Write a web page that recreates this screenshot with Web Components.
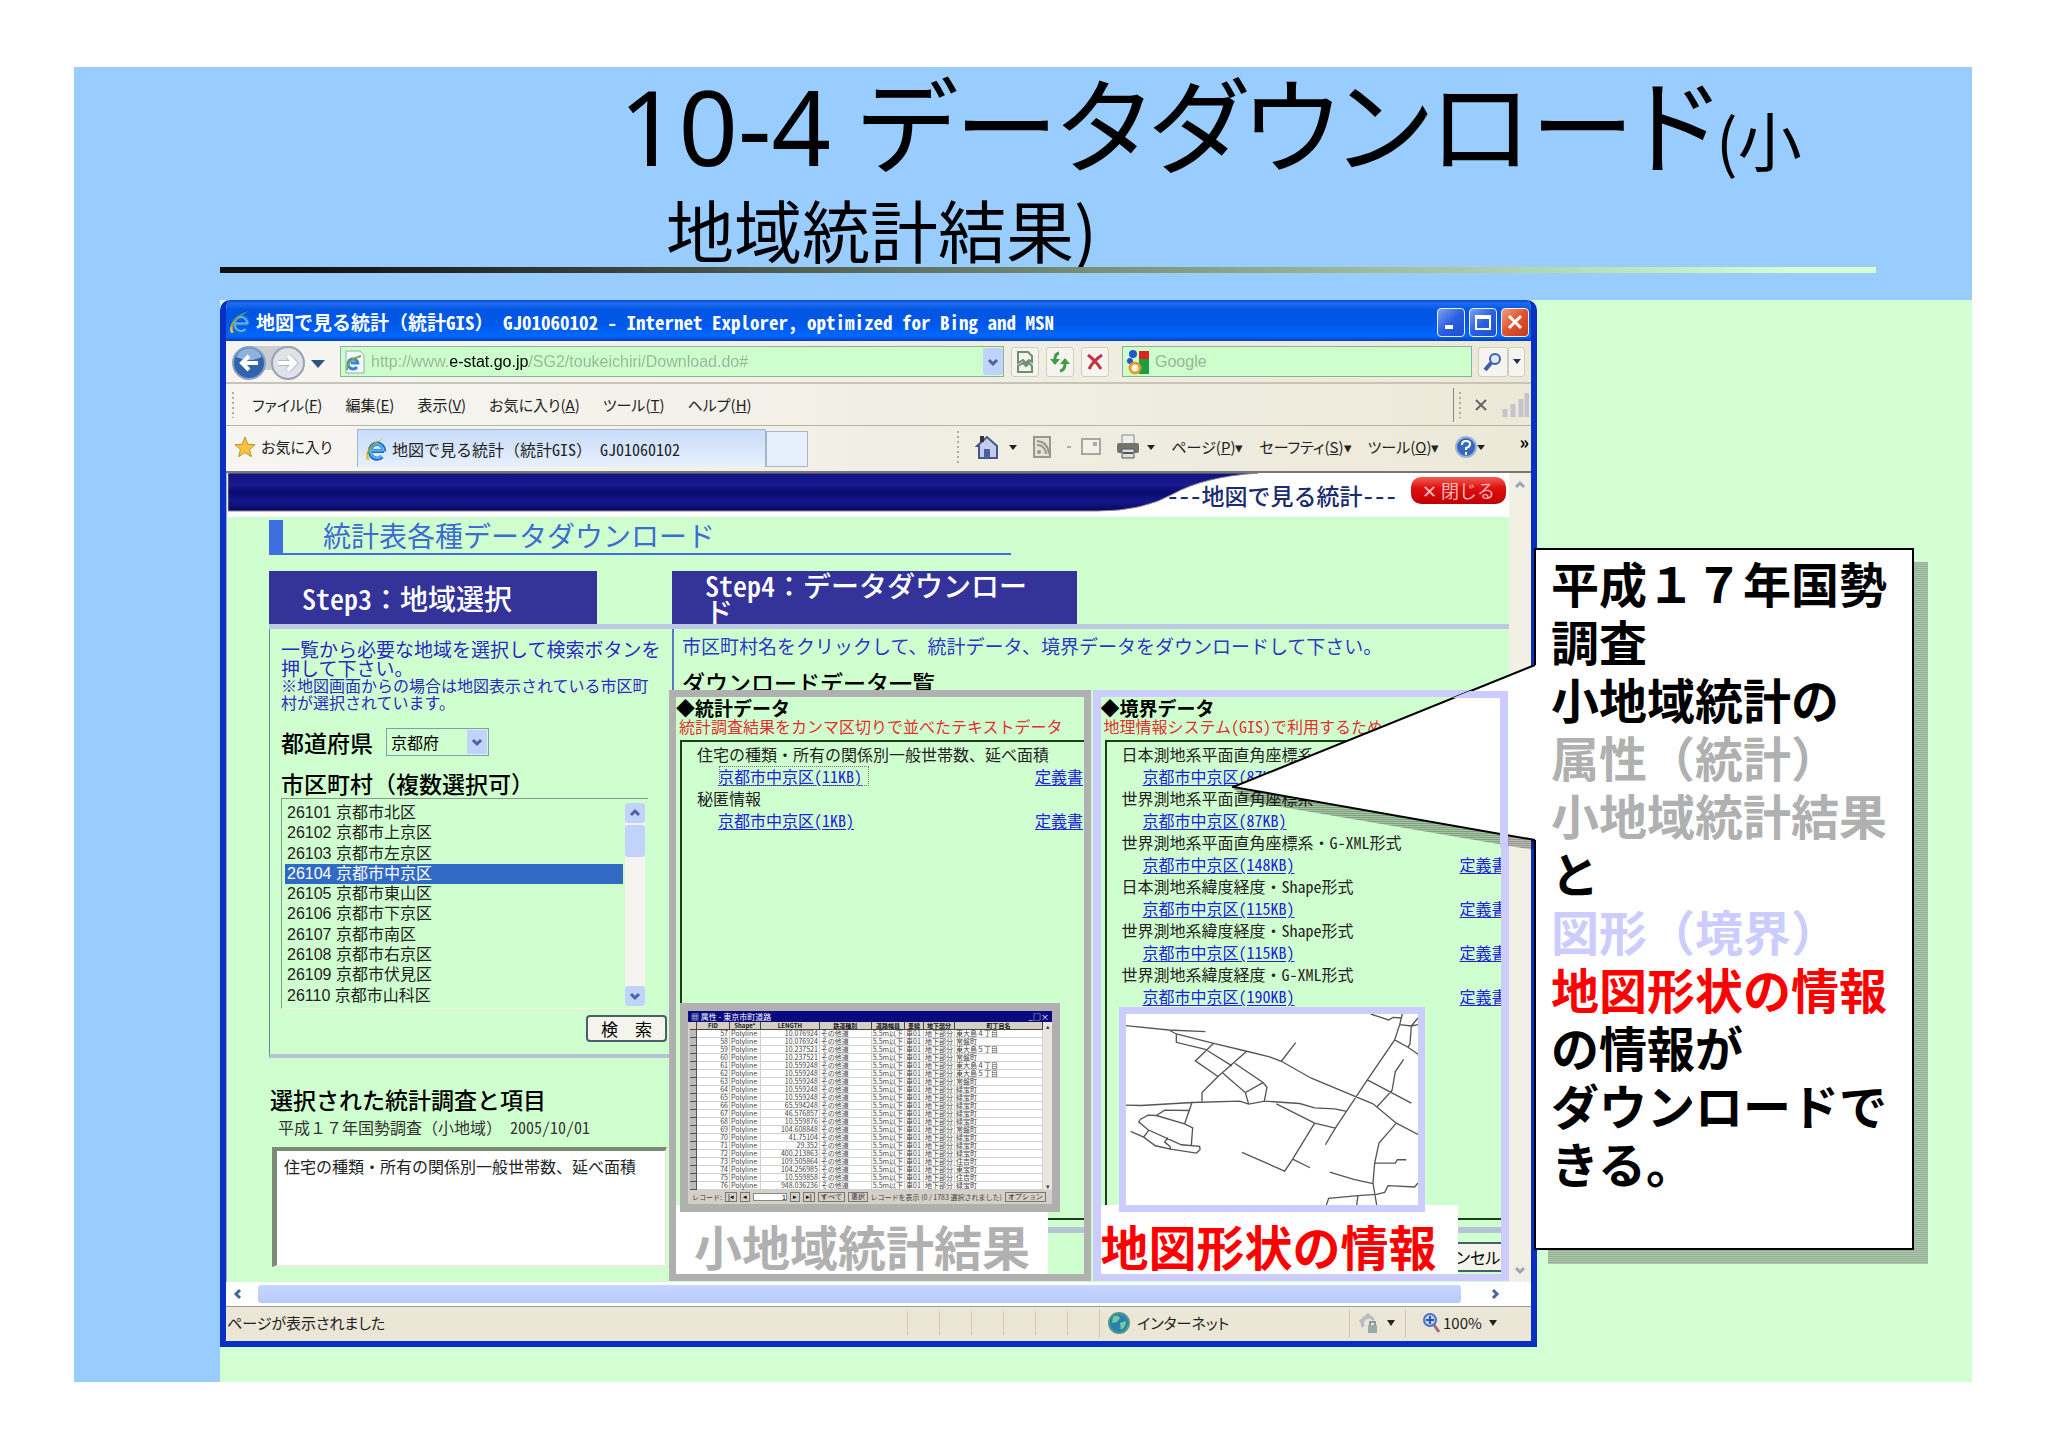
<!DOCTYPE html>
<html lang="ja">
<head>
<meta charset="utf-8">
<title>10-4 データダウンロード</title>
<style>
  body { margin: 0; background: #fff; font-family: "Noto Sans CJK JP", sans-serif; color: #000; }
</style>
</head>
<body>
<slide-page>
  <slide-title slot="title"></slide-title>
  <ie-window slot="main">
    <title-bar></title-bar>
    <address-bar></address-bar>
    <menu-bar></menu-bar>
    <tab-bar></tab-bar>
    <stat-page slot="page">
      <stat-banner></stat-banner>
      <stat-heading>統計表各種データダウンロード</stat-heading>
      <region-step slot="left"></region-step>
      <download-step slot="right">
        <data-frame class="gray">
          <span slot="title">◆統計データ</span>
          <span slot="note">統計調査結果をカンマ区切りで並べたテキストデータ</span>
          <data-entry label="住宅の種類・所有の関係別一般世帯数、延べ面積" size="11KB" focus more></data-entry>
          <data-entry label="秘匿情報" size="1KB" more></data-entry>
          <attribute-table slot="figure"></attribute-table>
          <span slot="caption">小地域統計結果</span>
        </data-frame>
        <data-frame class="lilac">
          <span slot="title">◆境界データ</span>
          <span slot="note">地理情報システム(GIS)で利用するため</span>
          <data-entry label="日本測地系平面直角座標系" size="87KB"></data-entry>
          <data-entry label="世界測地系平面直角座標系" size="87KB"></data-entry>
          <data-entry label="世界測地系平面直角座標系・G-XML形式" size="148KB" more></data-entry>
          <data-entry label="日本測地系緯度経度・Shape形式" size="115KB" more></data-entry>
          <data-entry label="世界測地系緯度経度・Shape形式" size="115KB" more></data-entry>
          <data-entry label="世界測地系緯度経度・G-XML形式" size="190KB" more></data-entry>
          <street-map slot="figure"></street-map>
          <span slot="caption">地図形状の情報</span>
          <button slot="cancel" type="button">キャンセル</button>
        </data-frame>
      </download-step>
    </stat-page>
    <status-bar slot="status"></status-bar>
  </ie-window>
  <speech-callout slot="callout">
    <p>平成１７年国勢調査</p>
    <p>小地域統計の</p>
    <p class="gray">属性（統計）</p>
    <p class="gray">小地域統計結果</p>
    <p>と</p>
    <p class="lilac">図形（境界）</p>
    <p class="red">地図形状の情報</p>
    <p>の情報が</p>
    <p>ダウンロードできる。</p>
  </speech-callout>
</slide-page>

<script>
const define = (tag, css, html) => {
  const t = document.createElement('template');
  t.innerHTML = `<style>*,:host{box-sizing:border-box}:host{display:block}${css}</style>${typeof html === 'string' ? html : ''}`;
  customElements.define(tag, class extends HTMLElement {
    connectedCallback() {
      if (this.shadowRoot) return;
      const root = this.attachShadow({ mode: 'open' });
      root.append(t.content.cloneNode(true));
      if (typeof html === 'function') root.innerHTML += html(this);
    }
  });
};

const ieLogo = `<svg viewBox="0 0 24 24" width="24" height="24" aria-hidden="true">
  <path d="M7 14h13M20 14.500a7 7.500 0 1 0-2 5" fill="none" stroke="#1f6cc8" stroke-width="4.200"/>
  <path d="M7 13.500h12.500M19.500 14a6.500 7 0 1 0-2 5" fill="none" stroke="#5ab4f4" stroke-width="2"/>
  <path d="M3 23C-1 17 7 5 21 1c-6 3-9 5-12 8C5 14 3 19 6 22c-1 1-2 1-3 1z" fill="#e8bc3c"/>
  <path d="M3 17c1-5 6-11 13-14C11 7 6 12 5 17z" fill="#6ea648"/></svg>`;
const chevron = (d) => `<svg viewBox="0 0 12 12" width="12" height="12" aria-hidden="true"><path d="${{
  up: 'M2 8l4-4 4 4', down: 'M2 4l4 4 4-4', left: 'M8 2L4 6l4 4', right: 'M4 2l4 4-4 4' }[d]}" fill="none" stroke="#4a62a0" stroke-width="3"/></svg>`;

define('slide-page', `
  :host{margin:67px 76px 67px 74px;background:#99ccff;position:relative}
  .body{display:grid;grid-template-columns:minmax(0,1fr) 435px;margin-left:146px;background:#d4ffd4;padding-bottom:35px}
  .callout{position:absolute;right:58px;top:481px;width:380px}`,
  `<slot name="title"></slot><div class="body"><slot name="main"></slot></div><div class="callout"><slot name="callout"></slot></div>`);

define('slide-title', `
  :host{height:233px;display:flex;flex-direction:column}
  h1{margin:0;font-weight:400;white-space:nowrap;padding:2px 0 0 592px;height:200px}
  .a{display:block;text-indent:-47px;font-size:104px;line-height:114px;font-family:"Noto Sans","Noto Sans CJK JP",sans-serif;font-feature-settings:"palt"}
  .a small{font-size:64px}
  .b{display:block;font-size:68px;line-height:68px}
  .b,.a small{font-family:"Noto Sans CJK JP",sans-serif}
  .rule{margin:0 96px 0 146px;height:6px;background:linear-gradient(90deg,#111 5%,#d4ffd4 95%)}`,
  `<h1><span class="a">10-4 データダウンロード<small>(小</small></span><span class="b">地域統計結果)</span></h1><div class="rule"></div>`);

define('ie-window', `
  :host{display:flex;flex-direction:column;background:#ece9d8;border:solid #0831c4;border-width:0 6px 6px;border-radius:10px 10px 0 0;overflow:hidden;font-size:16px;line-height:20px}
  .view{display:flex;padding-left:1px;border-left:1px solid #8fb4d0}
  .view ::slotted(*){flex:1;min-width:0}
  .v{width:22px;background:#f8f6f0;display:flex;flex-direction:column;justify-content:space-between;align-items:center;padding:6px 0;opacity:.5}
  .h{display:flex;align-items:center;height:24px;background:#fff;padding:2px 30px 2px 6px}
  .h i{flex:1;height:18px;margin:0 28px 0 14px;background:linear-gradient(#c6d6ff,#b6ccf8);border-radius:3px}`,
  `<slot></slot><div class="view"><slot name="page"></slot><div class="v">${chevron('up')}${chevron('down')}</div></div>
   <div class="h">${chevron('left')}<i></i>${chevron('right')}</div><slot name="status"></slot>`);

define('title-bar', `
  :host{display:flex;align-items:center;height:41px;margin:0 -6px;padding:3px 8px 0 8px;background:linear-gradient(#0a48c8,#1c6cf0 8%,#0055e0 25%,#0058ea 60%,#0068ff 88%,#0040c0)}
  h2{flex:1;margin:0 0 0 4px;font-size:19px;line-height:24px;font-weight:700;color:#fff;white-space:nowrap;font-feature-settings:"hwid"}
  .f{font-feature-settings:normal}
  button{width:28px;height:29px;margin-left:4px;padding:0;border:1px solid #e8f0ff;border-radius:4px;background:linear-gradient(135deg,#7ba2f5,#2a5fe0 50%,#1c4fd0);display:grid;place-items:center}
  .x{background:linear-gradient(135deg,#f0a080,#e0502c 50%,#c83c18)}`,
  `${ieLogo}<h2>地図で見る統計<span class="f">（</span>統計GIS<span class="f">）　</span>GJ01060102 - Internet Explorer, optimized for Bing and MSN</h2>
  <button type="button" aria-label="最小化"><svg width="18" height="18"><path d="M3 14h8" stroke="#fff" stroke-width="4"/></svg></button>
  <button type="button" aria-label="最大化"><svg width="18" height="18"><path d="M2 3h14v13H2zM2 5h14" fill="none" stroke="#fff" stroke-width="2"/></svg></button>
  <button type="button" class="x" aria-label="閉じる"><svg width="18" height="18"><path d="M3 3l12 12M15 3L3 15" stroke="#fff" stroke-width="3"/></svg></button>`);

define('address-bar', `
  :host{display:flex;align-items:center;height:43px;padding:0 6px;background:linear-gradient(90deg,#f6f5f2,#ece9d8);border-bottom:2px solid #c8c5b8}
  .nav{width:96px;height:38px}
  .box{display:flex;align-items:center;height:31px;background:#ccffcc;border:1px solid #8fae9c;padding:0 0 0 4px}
  .url{width:664px;margin-left:12px}
  input{flex:1;min-width:0;border:0;padding:0;margin:0 0 0 6px;font:16px/24px "Liberation Sans","Noto Sans CJK JP",sans-serif;background:none;color:#9ab49a;outline:0}
  .url input{background:linear-gradient(90deg,#9ab49a 79px,#000 79px,#000 158px,#9ab49a 158px);-webkit-background-clip:text;background-clip:text;color:transparent}
  button{padding:0;border:1px solid #cfccc0;border-radius:3px;background:#f6f4ee;width:28px;height:30px;display:grid;place-items:center;margin-left:7px}
  .drop{background:#c2d3fb;border:0;margin:0;width:20px;height:27px}
  .search{flex:1;margin-left:13px}
  .mag{width:30px;margin-left:6px}.arr{width:17px;margin:0}`,
  `<svg class="nav" viewBox="0 0 96 38" aria-hidden="true">
    <rect x="10" y="3" width="60" height="24" rx="12" fill="#c9cdd2"/>
    <circle cx="17" cy="20" r="16" fill="#2f63ad" stroke="#8aa0c0" stroke-width="2"/><path d="M4 14a14 14 0 0 1 26 0q-13 6-26 0" fill="#8db2e2"/>
    <path d="M26 20H10m7-7l-7 7 7 7" fill="none" stroke="#fff" stroke-width="4"/>
    <circle cx="56" cy="20" r="16" fill="#dfe2e8" stroke="#9aa2b0" stroke-width="2"/>
    <path d="M46 20h17m-7-7l7 7-7 7" fill="none" stroke="#b4bac6" stroke-width="6"/><path d="M46 20h17m-7-7l7 7-7 7" fill="none" stroke="#fff" stroke-width="4"/>
    <path d="M79 17h14l-7 8z" fill="#2f5680"/></svg>
  <div class="box url"><svg width="20" height="24" viewBox="0 0 20 24"><path d="M1 1h14l4 4v18H1z" fill="#f4f7ff" stroke="#9aa"/><path d="M6 13h8M13 14a5 5 0 1 0-1 3" fill="none" stroke="#3a84d8" stroke-width="3"/><path d="M2 20q0-10 14-14" fill="none" stroke="#7aa840" stroke-width="2"/></svg>
    <input aria-label="アドレス" value="http://www.e-stat.go.jp/SG2/toukeichiri/Download.do#"><button class="drop" type="button" aria-label="履歴">${chevron('down')}</button></div>
  <button type="button" aria-label="互換表示"><svg width="20" height="24" viewBox="0 0 20 24"><path d="M3 2h10l4 4v6l-3-2-3 3-3-3-5 3zM3 22v-6l5-3 3 3 3-3 3 3v6z" fill="none" stroke="#6d9070" stroke-width="2"/></svg></button>
  <button type="button" aria-label="更新"><svg width="22" height="22" viewBox="0 0 22 22"><path d="M10 2Q6 3 6 8" fill="none" stroke="#3f9b45" stroke-width="3"/><path d="M1 8h10l-5 6z" fill="#3f9b45"/><path d="M11 20q5-1 5-7" fill="none" stroke="#3f9b45" stroke-width="3"/><path d="M11 13h10l-5-6z" fill="#3f9b45"/></svg></button>
  <button type="button" aria-label="中止"><svg width="20" height="20" viewBox="0 0 20 20"><path d="M3 3q8 6 13 14M17 3Q8 9 4 17" fill="none" stroke="#c0344a" stroke-width="3"/></svg></button>
  <div class="box search"><svg width="22" height="26" viewBox="0 0 22 26"><path d="M12 2h10v8H12z" fill="#d22"/><path d="M12 10h10v15H12z" fill="#1b9e3e"/><circle cx="6" cy="5" r="4" fill="#2456c8"/><circle cx="3" cy="12" r="3" fill="#2456c8"/><circle cx="8" cy="19" r="5" fill="#fff" stroke="#e99a20" stroke-width="3"/></svg><input aria-label="検索" value="Google"></div>
  <button class="mag" type="button" aria-label="検索する"><svg width="20" height="20" viewBox="0 0 20 20"><circle cx="12" cy="7" r="5" fill="#dfe9fb" stroke="#3b5fae" stroke-width="2"/><path d="M8 11l-6 7" stroke="#3b5fae" stroke-width="4"/></svg></button><button class="arr" type="button" aria-label="検索オプション"><svg width="8" height="6"><path d="M0 0h8L4 5z" fill="#234"/></svg></button>`);

define('menu-bar', `
  :host{display:flex;align-items:center;height:42px;padding:0 2px 0 6px;background:linear-gradient(90deg,#f6f5f2,#ece9d8);border-bottom:1px solid #b8b5a5}
  i{width:2px;height:26px;background:repeating-linear-gradient(#b0ad9e 0 2px,transparent 2px 5px)}
  nav{flex:1;display:flex;gap:23px;padding-left:18px}
  a{color:#222;text-decoration:none;white-space:nowrap;font-feature-settings:"palt";font-size:15px}
  .r{height:34px;border-left:1px solid #888;padding-left:5px;display:flex;align-items:center;gap:14px;color:#555}`,
  `<i></i><nav><a href="#">ファイル(<u>F</u>)</a><a href="#">編集(<u>E</u>)</a><a href="#">表示(<u>V</u>)</a><a href="#">お気に入り(<u>A</u>)</a><a href="#">ツール(<u>T</u>)</a><a href="#">ヘルプ(<u>H</u>)</a></nav>
  <div class="r"><i></i><svg width="12" height="12"><path d="M1 1l10 10M11 1L1 11" stroke="#666" stroke-width="2"/></svg><svg width="28" height="26"><path d="M4 25v-8M12 25V12M20 25V7M26 25V1" stroke="#c4c4cc" stroke-width="5"/></svg></div>`);

define('tab-bar', `
  :host{display:flex;align-items:center;height:47px;padding:0 2px 4px 8px;background:linear-gradient(90deg,#f6f5f2,#ece9d8);border-bottom:2px solid #777;font-size:15px;font-feature-settings:"palt"}
  a{color:#222;text-decoration:none;white-space:nowrap}
  .fav{display:flex;align-items:center;gap:5px;width:123px}
  .tab{display:flex;align-items:center;gap:4px;width:409px;height:38px;margin-top:3px;padding-left:6px;border:1px solid #a8b4c8;border-bottom:0;background:linear-gradient(#c8dcfa,#e8f0fc);font-size:16px}
  .f{font-feature-settings:normal}.h{font-feature-settings:"hwid"}
  .new{width:42px;height:36px;margin-top:5px;border:1px solid #a8b4c8;background:#e6effc}
  .cmd{flex:1;display:flex;align-items:center;justify-content:flex-end;gap:16px}
  i{width:2px;height:32px;background:repeating-linear-gradient(#b0ad9e 0 2px,transparent 2px 5px)}
  .q{align-self:flex-start;margin-left:18px;font-size:18px;font-weight:700;line-height:20px}`,
  `<a class="fav" href="#"><svg width="22" height="22" viewBox="0 0 24 24"><path d="M12 1l3 8 8 .500-6 5 2 8-7-4.500-7 4.500 2-8-6-5 8-.500z" fill="#f9c440" stroke="#c08a20"/></svg>お気に入り</a>
  <a class="tab" href="#">${ieLogo}<span class="h">地図で見る統計<span class="f">（</span>統計GIS<span class="f">）</span> GJ01060102</span></a><span class="new"></span>
  <div class="cmd"><i></i>
   <svg width="42" height="26" viewBox="0 0 42 26"><path d="M2 12L12 3l10 9v12H4V12z" fill="#c6cdec" stroke="#4a5688" stroke-width="2"/><path d="M5 2h4v6H5z" fill="#333"/><path d="M9 15h6v9H9z" fill="#4a5fa0"/><path d="M34 11h8l-4 5z" fill="#222"/></svg>
   <svg width="18" height="22" viewBox="0 0 18 22"><rect x="1" y="1" width="16" height="20" fill="#e4e2d8" stroke="#9a988c" stroke-width="2"/><path d="M4 9q8 0 9 9M4 5q11 1 12 13" fill="none" stroke="#9a988c" stroke-width="2"/><circle cx="6" cy="16" r="2" fill="#9a988c"/></svg>
   <svg width="34" height="18" viewBox="0 0 34 18"><path d="M0 9h4" stroke="#aaa" stroke-width="2"/><rect x="15" y="1" width="18" height="15" fill="#f2f0ea" stroke="#aaa89c" stroke-width="2"/><path d="M26 4h4v4h-4z" fill="#aaa"/></svg>
   <svg width="38" height="26" viewBox="0 0 38 26"><path d="M5 1h12v9H5z" fill="#eee" stroke="#888"/><rect x="0" y="9" width="22" height="10" rx="2" fill="#74746e"/><path d="M5 15h12v9H5z" fill="#ddd" stroke="#555"/><path d="M6 19h10" stroke="#555" stroke-width="2"/><path d="M30 11h8l-4 5z" fill="#222"/></svg>
   <a href="#">ページ(<u>P</u>)▾</a><a href="#">セーフティ(<u>S</u>)▾</a><a href="#">ツール(<u>O</u>)▾</a>
   <svg width="30" height="24" viewBox="0 0 30 24" aria-label="ヘルプ"><circle cx="11" cy="12" r="10" fill="#3a68b8" stroke="#9ab4dc" stroke-width="2"/><path d="M7 10q0-4 4-4t4 3-4 4v2M11 17v3" fill="none" stroke="#fff" stroke-width="2"/><path d="M22 10h8l-4 5z" fill="#222"/></svg>
   <span class="q">»</span></div>`);

define('stat-page', `
  :host{background:#d0ffcf;display:flex;flex-direction:column}
  .cols{display:grid;grid-template-columns:403px minmax(0,1fr);padding:16px 0 0 41px}`,
  `<slot></slot><div class="cols"><slot name="left"></slot><slot name="right"></slot></div>`);

define('stat-banner', `
  :host{height:44px;position:relative;display:flex;justify-content:flex-end;background:#fff}
  svg{position:absolute;left:0;top:0}
  .t{position:relative;font-size:23px;line-height:44px;color:#1a2c6e;font-weight:500;margin-right:14px;font-feature-settings:"hwid"}
  button{position:relative;width:95px;height:27px;margin:4px 3px 0 0;padding:0;border:0;border-radius:10px;background:linear-gradient(#f06050,#e01010 40%,#c00000);color:#fbb;font:18px/27px "Noto Sans CJK JP",sans-serif}`,
  `<svg width="1040" height="40" aria-hidden="true"><defs><linearGradient id="g" x2="0" y2="1"><stop offset="0" stop-color="#101080"/><stop offset=".3" stop-color="#181c90"/><stop offset=".5" stop-color="#0a0a70"/><stop offset=".75" stop-color="#141888"/><stop offset="1" stop-color="#060660"/></linearGradient></defs>
  <path d="M0 0H1030Q975 4 945 21Q915 38 870 38H0z" fill="url(#g)" stroke="#888" stroke-width="1"/></svg>
  <span class="t">---地図で見る統計---</span><button type="button">✕ 閉じる</button>`);

define('stat-heading', `
  h2{margin:3px 498px 0 41px;height:35px;border-left:14px solid #3e6ee0;border-bottom:2px solid #3e6ee0;padding-left:40px;font-size:28px;line-height:30px;font-weight:400;color:#3c6cd4;white-space:nowrap}`,
  `<h2><slot></slot></h2>`);

const stepHead = `h3.step{margin:0;height:53px;background:#333399;color:#fff;font-weight:500;font-size:28px;line-height:26px;padding-left:33px;display:flex;align-items:center;white-space:nowrap;font-feature-settings:"hwid"}
  .f{font-feature-settings:normal}
  .bar{height:5px;background:#bcc8e4}`;

define('region-step', `${stepHead}
  .step{width:328px}
  .panel{border-left:1px solid #6a8a9c;border-bottom:4px solid #b4c4d4;padding:10px 5px 12px 11px}
  p{margin:0;color:#2a2ac0;font-size:16px;line-height:17px;white-space:nowrap}
  .lead{font-size:19px;line-height:19px}
  .lbl,h4{font-size:23px;line-height:24px;font-weight:500;margin:0;display:block}
  .row{display:flex;align-items:center;gap:13px;margin-top:17px}
  .pref{appearance:none;width:103px;height:28px;border:1px solid #7f9db9;border-radius:0;background:#d0ffcf;padding:0 4px;font:16px/24px "Noto Sans CJK JP",sans-serif;color:#000}
  .combo{display:grid}.combo>*{grid-area:1/1}
  .combo b{justify-self:end;align-self:center;margin-right:2px;background:#c2d3fb;width:20px;height:24px;display:grid;place-items:center}
  #cl{margin-top:15px}
  .list{display:flex;height:211px;margin:3px 19px 0 0;border:1px solid #8a9a8a;border-right:0;border-bottom-color:#f4f4e0;padding:4px 3px 2px}
  .cities{flex:1;min-width:0;display:grid;grid-auto-rows:1fr}
  .cities label{padding-left:2px;font:16px/20px "Liberation Sans","Noto Sans CJK JP",sans-serif;color:#222;white-space:nowrap}
  .cities input{appearance:none;width:0;height:0;margin:0;position:absolute}
  .cities label:has(:checked){background:#316ac5;color:#fff}
  .sb{width:20px;margin-left:2px;display:flex;flex-direction:column;align-items:center;background:#f6f4f0}
  .sb span{width:20px;height:20px;border-radius:3px;background:#c2d3fb;display:grid;place-items:center}
  .sb i{width:20px;height:32px;margin:2px 0 auto;border-radius:3px;background:#c2d3fb}
  button{display:block;width:81px;height:27px;margin:6px 0 0 auto;border:2px solid #49606c;border-radius:4px;background:#f5f4ea;padding:0;font:17px/22px "Noto Sans CJK JP",sans-serif}
  h4{margin:29px 0 0 1px}
  .survey{margin:7px 0 0 9px;color:#333;line-height:18px}
  .h{font-feature-settings:"hwid"}
  textarea{display:block;width:395px;height:120px;margin:11px 0 14px 3px;border:solid;border-width:4px 2px 2px 5px;border-color:#7c8a78 #e8ecd8 #e8ecd8 #7c8a78;background:#fff;padding:5px 7px;resize:none;font:16px/20px "Noto Sans CJK JP",sans-serif;color:#222;overflow:hidden}`,
  `<h3 class="step">Step3<span class="f">：</span>地域選択</h3><div class="bar"></div>
  <div class="panel"><p class="lead">一覧から必要な地域を選択して検索ボタンを<br>押して下さい。</p><p>※地図画面からの場合は地図表示されている市区町<br>村が選択されています。</p>
  <div class="row"><label class="lbl" for="pref">都道府県</label><div class="combo"><select id="pref" class="pref"><option>京都府</option></select><b>${chevron('down')}</b></div></div>
  <div class="lbl" id="cl">市区町村（複数選択可）</div>
  <div class="list"><div class="cities" role="group" aria-labelledby="cl">${['26101 京都市北区','26102 京都市上京区','26103 京都市左京区','26104 京都市中京区','26105 京都市東山区','26106 京都市下京区','26107 京都市南区','26108 京都市右京区','26109 京都市伏見区','26110 京都市山科区'].map((c, i) => `<label><input type="checkbox"${i === 3 ? ' checked' : ''}>${c}</label>`).join('')}</div>
  <div class="sb"><span>${chevron('up')}</span><i></i><span>${chevron('down')}</span></div></div>
  <button type="button">検　索</button></div>
  <h4>選択された統計調査と項目</h4><p class="survey">平成１７年国勢調査（小地域）　<span class="h">2005/10/01</span></p>
  <textarea aria-label="選択された統計調査と項目">住宅の種類・所有の関係別一般世帯数、延べ面積</textarea>`);

define('download-step', `${stepHead}
  .step{width:405px}
  .panel{border-left:2px solid #5a78c8}
  p{margin:0;padding:7px 0 0 8px;font-size:19px;line-height:20px;color:#2a3ac0;white-space:nowrap}
  h4{margin:14px 0 0 8px;font-size:23px;line-height:24px;font-weight:500}
  .frames{display:grid;grid-template-columns:421fr 416fr;gap:2px;margin:-4px 0 1px -5px;height:591px;position:relative}`,
  `<h3 class="step"><span>Step4<span class="f">：</span>データダウンロー<br>ド</span></h3><div class="bar"></div>
  <div class="panel"><p>市区町村名をクリックして、統計データ、境界データをダウンロードして下さい。</p><h4>ダウンロードデータ一覧</h4>
  <div class="frames"><slot></slot></div></div>`);

define('data-frame', `
  :host{position:relative;overflow:hidden;background:#d0ffcf;border:7px solid #b0b0b0;--cap:#b0b0b0;--fx:4px;--fw:380px;--lw:372px;--lp:18px}
  :host(.lilac){border-color:#ccccff;border-left-width:8px;border-right-width:8px;--cap:#ff0000;--fx:18px;--fw:306px;--lw:357px;--lp:0px}
  .t{padding-top:2px;font-size:19px;line-height:18px;font-weight:700;white-space:nowrap}
  .n{font-size:16px;line-height:18px;color:#e03030;padding-left:3px;white-space:nowrap;font-feature-settings:"hwid"}
  .table{margin:5px 0 0 4px;height:480px;border:solid #1c3c1c;border-width:2px 0 2px 2px;padding-top:1px;overflow:hidden}
  .band{height:6px;margin-top:7px;background:#b4c4d4}
  .over{position:absolute;left:0;bottom:0;width:var(--lw)}
  .fig{position:relative;z-index:1;width:var(--fw);margin-left:var(--fx)}
  .cap{background:#fff;margin-top:-7px;height:69px;padding:8px 0 0 var(--lp);color:var(--cap);font-size:48px;line-height:64px;font-weight:700;white-space:nowrap}
  ::slotted(button){position:absolute;right:-18px;bottom:2px;height:30px;width:110px;border:2px solid #49606c;border-radius:3px;background:#f5f4ea;padding:0;font:16px/22px "Noto Sans CJK JP",sans-serif;font-feature-settings:"palt"}`,
  `<div class="t"><slot name="title"></slot></div><div class="n"><slot name="note"></slot></div>
  <div class="table"><slot></slot></div><div class="band"></div><slot name="cancel"></slot>
  <div class="over"><div class="fig"><slot name="figure"></slot></div><div class="cap"><slot name="caption"></slot></div></div>`);

define('data-entry', `
  :host{font-size:16px;line-height:22px;white-space:nowrap;color:#222;font-feature-settings:"hwid"}
  .l{padding-left:15px}
  .r{display:grid;grid-template-columns:353px auto}
  a{color:#2222dd;justify-self:start;text-underline-offset:2px}
  .r a:first-child{margin-left:36px}
  .f{outline:1px dotted #777;outline-offset:-2px;padding-right:8px}`,
  (el) => `<div class="l">${el.getAttribute('label')}</div><div class="r"><a href="#" class="${el.hasAttribute('focus') ? 'f' : ''}">京都市中京区(${el.getAttribute('size')})</a>${el.hasAttribute('more') ? '<a href="#">定義書</a>' : ''}</div>`);

const lengths = ['10.076924','10.076924','10.237521','10.237521','10.559248','10.559248','10.559248','10.559248','10.559248','65.594248','46.576857','10.559876','104.608848','41.75104','29.352','400.213863','109.505864','104.256985','10.559858','948.036236'];
const towns = ['東大島４丁目','常盤町','東大島５丁目','常盤町','東大島４丁目','東大島５丁目','常盤町','緑宝町','緑宝町','緑宝町','緑宝町','緑宝町','常盤町','緑宝町','緑宝町','緑宝町','住吉町','東宝町','住吉町','緑宝町'];
define('attribute-table', `
  :host{height:209px;border:8px solid #b0b0b0;background:#d4d0c8;font-size:7px;line-height:8px;color:#444;display:flex;flex-direction:column}
  .tt{height:11px;background:#0a0a80;color:#fff;line-height:11px;font-size:8px;padding:0 3px;display:flex;justify-content:space-between}
  .g{display:flex;height:168px}
  table{flex:1;border-collapse:separate;border-spacing:0;table-layout:fixed;background:#fff;margin-left:2px}
  td,th{padding:0 1px;border:1px solid #d0d0d0;border-width:0 1px 1px 0;height:8px;line-height:7px;white-space:nowrap;text-align:left}
  th{background:#d4d0c8;text-align:center;border-color:#444;color:#111;font-size:6px}
  td:first-child{background:#bbb;border-color:#555}
  td:nth-child(2),td:nth-child(4){text-align:right}
  .sb{width:9px;background:#e8e6e0;display:flex;flex-direction:column;justify-content:space-between;text-align:center}
  .ft{height:14px;display:flex;align-items:center;gap:3px;padding:0 4px;white-space:nowrap}
  .ft input{width:34px;height:8px;border:1px solid #888;padding:0;font-size:7px;line-height:7px;text-align:right}
  .ft button{font-size:7px;line-height:8px;height:10px;padding:0 2px;border:1px solid #777;background:#d4d0c8}`,
  () => `<div class="tt"><span>▦ 属性 - 東京市町道路</span><span>_□×</span></div><div class="g"><table><colgroup>${[7,33,31,59,52,31,19,30,88].map(w => `<col style="width:${w}px">`).join('')}</colgroup>
  <tr><th></th><th>FID</th><th>Shape*</th><th>LENGTH</th><th>鉄道種別</th><th>道路幅員</th><th>車線</th><th>地下部分</th><th>町丁目名</th></tr>
  ${lengths.map((n, i) => `<tr><td></td><td>${57 + i}</td><td>Polyline</td><td>${n}</td><td>その他道</td><td>5.5m以下</td><td>車01</td><td>地下部分</td><td>${towns[i]}</td></tr>`).join('')}</table>
  <div class="sb"><span>▴</span><span>▾</span></div></div>
  <div class="ft">レコード: <button>|◂</button><button>◂</button><input aria-label="レコード" value="1"><button>▸</button><button>▸|</button><button>すべて</button><button>選択</button>レコードを表示 (0 / 1783 選択されました)<button>オプション</button></div>`);

define('street-map', `
  :host{height:205px;border:7px solid #ccccff;background:#fff}
  svg{display:block;width:100%;height:100%}path{fill:none;stroke:#555;stroke-width:4}`,
  `<svg viewBox="134 72 876 574" preserveAspectRatio="none" role="img" aria-label="道路地図"><path d="M134 107L262 120L372 125M262 120L285 132L397 160L496 184L562 200L600 214L690 265L875 342L945 400L1010 434M285 132V157L372 178L452 228M397 160L342 213L410 260M496 184L410 260L362 308V334M460 220L545 278L557 292L549 334M425 250L492 308L502 343M545 278L492 308M134 346L180 347L332 338L475 334L502 343L550 334L655 341L700 354L760 357L793 364M585 342L700 400L762 415M600 214L643 158M963 72L955 104L940 150L858 270L762 415L732 465M868 72L922 90L935 82L960 84M955 104L990 108L1010 84M990 108L1010 104M990 108L986 162L980 172M940 150L980 172L1010 193M967 208L942 245L932 302L888 350M858 270L990 340M945 400L893 460L880 520L875 580L886 646M880 520H942L948 510H975M745 547L820 570L875 582M735 646L742 626L830 618L885 614L910 608L920 588L1000 592L1010 580M830 618L826 646M700 400L634 508L610 544L482 488M634 508L686 534M332 338L310 402M325 362L250 361L225 377M310 402L225 377L200 376L178 388L172 396L200 420L300 465L355 470L356 480L345 490L268 478L222 468L187 442L148 425M310 402L334 414L330 466M187 442L203 420M260 443L250 457L266 470L268 480"/></svg>`);

define('status-bar', `
  :host{display:flex;align-items:center;height:35px;padding:0 6px 3px 1px;background:#ece6d6;border-top:1px solid #999;font-size:15px;color:#222;font-feature-settings:"palt"}
  .m{flex:1}.c{width:32px;height:24px;border-left:1px solid #cfc8b8}
  .z{display:flex;align-items:center;gap:7px;height:28px;border-left:1px solid #cfc8b8;padding-left:8px}
  .i{width:250px}.p{width:56px}.d{width:120px;padding-left:16px;gap:3px}.d svg:last-child{margin-left:auto;margin-right:28px}`,
  `<span class="m">ページが表示されました</span><i class="c"></i><i class="c"></i><i class="c"></i><i class="c"></i><i class="c"></i><i class="c"></i>
  <span class="z i"><svg width="22" height="22" viewBox="0 0 22 22"><circle cx="11" cy="11" r="10" fill="#2d7fae" stroke="#4a9a8a" stroke-width="2"/><path d="M5 5q5-3 7 1l-3 4-5 1zM12 11l6-2q0 6-5 9z" fill="#6fce9a"/></svg>インターネット</span>
  <span class="z p"><svg width="22" height="22" viewBox="0 0 22 22"><path d="M2 10l8-7 6 5M5 15q-3-8 6-10" fill="none" stroke="#b8bcc0" stroke-width="3"/><rect x="10" y="13" width="9" height="8" fill="#9aa"/><path d="M12 13v-3h5v3" fill="none" stroke="#899" stroke-width="2"/></svg><svg width="8" height="6"><path d="M0 0h8L4 6z" fill="#222"/></svg></span>
  <span class="z d"><svg width="18" height="20" viewBox="0 0 18 20"><circle cx="8" cy="7" r="6" fill="#bfd4f4" stroke="#4a74c0" stroke-width="2"/><path d="M8 3v8M4 7h8" stroke="#2858b0" stroke-width="2"/><path d="M12 12l5 7" stroke="#a68" stroke-width="3"/></svg>100%<svg width="8" height="6"><path d="M0 0h8L4 6z" fill="#222"/></svg></span>`);

define('speech-callout', `
  :host{position:relative}
  .shade{position:absolute;left:14px;top:14px;right:-14px;bottom:-14px;background:repeating-linear-gradient(#96ae96 0 1px,#aac8aa 1px 2px)}
  .box{position:relative;min-height:702px;background:#fff;border:2px solid #000;padding:3px 0 0 15px;font-size:48px;line-height:58px;font-weight:700}
  svg{position:absolute;left:-302px;top:117px}
  ::slotted(p){margin:0;width:348px;line-break:loose}
  ::slotted(.gray){color:#b0b0b0}::slotted(.lilac){color:#ccccff}::slotted(.red){color:#f00}`,
  `<div class="shade"></div><div class="box"><slot></slot></div>
  <svg width="305" height="190" aria-hidden="true"><defs><clipPath id="c"><path d="M0 122L302 0H305V175H302z"/></clipPath>
    <pattern id="s" width="4" height="2" patternUnits="userSpaceOnUse"><path d="M0 0H4V1H0z" fill="#000" opacity=".38"/><path d="M0 1H4V2H0z" fill="#000" opacity=".22"/></pattern></defs>
    <path d="M14 136L302 185V175L0 122z" fill="url(#s)"/>
    <path d="M305 0H302L0 122L302 175H305z" fill="#fff"/><path d="M303 0L1 122L303 175" fill="none" stroke="#000" stroke-width="2"/>
    <path d="M200 26H276V186H268V33H200z" fill="#ccccff" clip-path="url(#c)"/><path d="M268 169h8v14h-8z" fill="#ccccff"/></svg>`);
</script>
</body>
</html>
